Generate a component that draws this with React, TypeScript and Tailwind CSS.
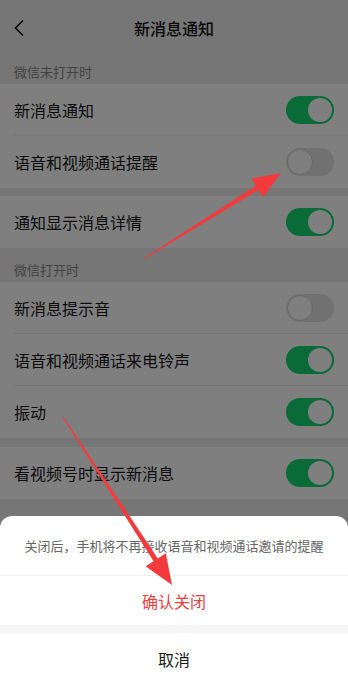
const font = { fontFamily: '"Noto Sans CJK SC", "Noto Sans", sans-serif' };

type Item = { label: string; on: boolean; last?: boolean };

function Toggle({ on }: { on: boolean }) {
  if (on) {
    return (
      <div className="w-[48px] h-[28px] rounded-full bg-[#14d470] flex items-center justify-end pr-[2px]">
        <div className="w-[24px] h-[24px] rounded-full bg-white" />
      </div>
    );
  }
  return (
    <div className="w-[48px] h-[28px] rounded-full bg-[#e3e3e3] flex items-center pl-[1px]">
      <div className="w-[26px] h-[26px] rounded-full bg-white border border-[#d0d0d0]" />
    </div>
  );
}

function Row({ label, on, last }: Item) {
  return (
    <div className="h-[52px] bg-white flex items-center pl-[14px] pr-[14px] relative">
      <span className="flex-1 text-[16px] text-[#191919]">{label}</span>
      <Toggle on={on} />
      {!last && <div className="absolute left-[14px] right-0 bottom-0 h-px bg-[#ececec]" />}
    </div>
  );
}

function Label({ text, h }: { text: string; h: string }) {
  return (
    <div className={`${h} flex items-end pl-[14px] pb-[3px]`}>
      <span className="text-[13px] leading-[18px] text-[#858585]">{text}</span>
    </div>
  );
}

export default function App() {
  return (
    <div className="relative w-full h-[694px] overflow-hidden bg-[#ededed]" style={font}>
      <div className="h-[49px] flex items-center relative">
        <svg className="absolute left-[13px] top-[19px]" width="12" height="18" viewBox="0 0 12 18">
          <path d="M10 1.5 L2.5 9 L10 16.5" fill="none" stroke="#111" strokeWidth="1.6" />
        </svg>
        <div className="flex-1 text-center text-[16px] font-medium text-[#111] pt-[7px]">新消息通知</div>
      </div>

      <Label text="微信未打开时" h="h-[35px]" />
      <Row label="新消息通知" on />
      <Row label="语音和视频通话提醒" on={false} last />
      <div className="h-[8px]" />
      <Row label="通知显示消息详情" on last />

      <Label text="微信打开时" h="h-[34px]" />
      <Row label="新消息提示音" on={false} />
      <Row label="语音和视频通话来电铃声" on />
      <Row label="振动" on last />
      <div className="h-[9px]" />
      <Row label="看视频号时显示新消息" on last />
      <Label text="消息通知横幅" h="h-[36px]" />

      <div className="absolute inset-0 bg-black/50" />

      <div className="absolute left-0 right-0 bottom-0 bg-white rounded-t-[12px]">
        <div className="h-[60px] flex items-center justify-center border-b border-[#f0f0f0]">
          <span className="text-[13px] text-[#666]">关闭后，手机将不再接收语音和视频通话邀请的提醒</span>
        </div>
        <div className="h-[49px] flex items-center justify-center">
          <span className="text-[16px] text-[#e64340]">确认关闭</span>
        </div>
        <div className="h-[8px] bg-[#f5f5f5]" />
        <div className="h-[52px] flex items-center justify-center">
          <span className="text-[16px] text-[#191919]">取消</span>
        </div>
        <div className="h-[9px]" />
      </div>

      <svg className="absolute left-0 top-0 pointer-events-none" width="348" height="694" viewBox="0 0 348 694">
        <polygon
          fill="#f43a3c"
          points="145.3,258.4 258.5,190.0 263.0,197.2 281,173 251.4,178.5 255.9,185.8 144.7,257.6"
        />
        <polygon
          fill="#f43a3c"
          points="62.5,417.3 153.6,561.2 145.6,566.3 172,585 165.8,553.3 157.8,558.4 63.5,416.7"
        />
      </svg>
    </div>
  );
}
